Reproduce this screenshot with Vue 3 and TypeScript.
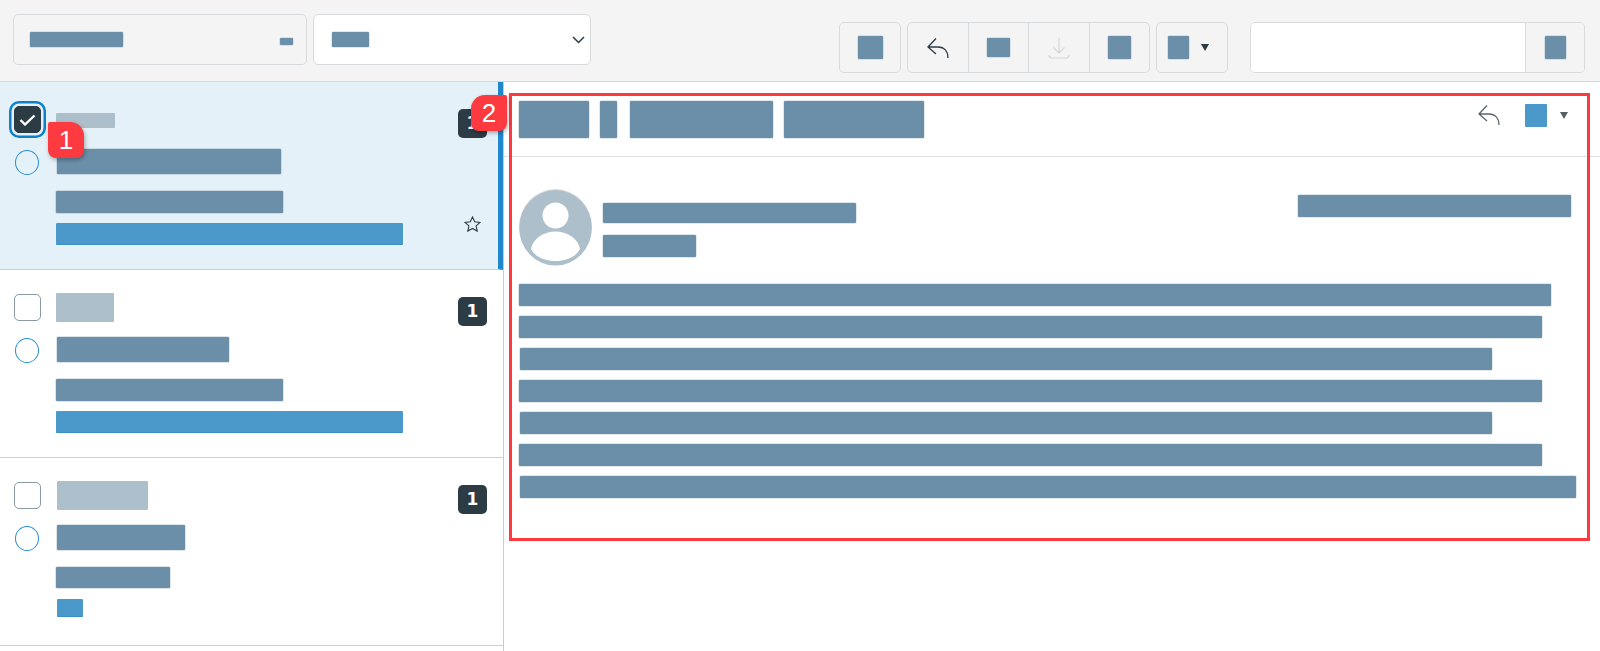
<script setup lang="ts">
interface Bar {
  width: number
  height: number
  top: number
  left: number
  tone: 'dim' | 'slate' | 'blue'
}

interface Message {
  id: number
  selected: boolean
  starred: boolean
  bars: Bar[]
}

const messages: Message[] = [
  {
    id: 1,
    selected: true,
    starred: true,
    bars: [
      { width: 59, height: 15, top: 31, left: 0, tone: 'dim' },
      { width: 224, height: 25, top: 21, left: 1, tone: 'slate' },
      { width: 227, height: 22, top: 17, left: 0, tone: 'slate' },
      { width: 347, height: 22, top: 10, left: 0, tone: 'blue' }
    ]
  },
  {
    id: 2,
    selected: false,
    starred: false,
    bars: [
      { width: 58, height: 29, top: 23, left: 0, tone: 'dim' },
      { width: 172, height: 25, top: 15, left: 1, tone: 'slate' },
      { width: 227, height: 22, top: 17, left: 0, tone: 'slate' },
      { width: 347, height: 22, top: 10, left: 0, tone: 'blue' }
    ]
  },
  {
    id: 3,
    selected: false,
    starred: false,
    bars: [
      { width: 91, height: 29, top: 23, left: 1, tone: 'dim' },
      { width: 128, height: 25, top: 15, left: 1, tone: 'slate' },
      { width: 114, height: 21, top: 17, left: 0, tone: 'slate' },
      { width: 26, height: 18, top: 11, left: 1, tone: 'blue' }
    ]
  }
]

const tabs = [
  { width: 70, gap: 0 },
  { width: 16.5, gap: 11 },
  { width: 142.5, gap: 13.5 },
  { width: 139.5, gap: 11.5 }
]

const bodyLines = [
  { width: 1032, left: 0 },
  { width: 1022.5, left: 0 },
  { width: 972, left: 1 },
  { width: 1022.5, left: 0 },
  { width: 972, left: 1 },
  { width: 1022.5, left: 0 },
  { width: 1055.5, left: 1 }
]
</script>

<template>
  <div class="inbox">
    <header class="toolbar">
      <div class="filters">
        <div class="field field--search">
          <span class="block block--course"></span>
          <span class="block block--tiny"></span>
        </div>
        <div class="field field--select">
          <span class="block block--term"></span>
          <svg class="chevron" width="13" height="8" viewBox="0 0 13 8" aria-hidden="true">
            <path d="M1 1l5.500 5.500L12 1" />
          </svg>
        </div>
      </div>

      <div class="actions">
        <button type="button" class="tool tool--single">
          <span class="block block--compose"></span>
        </button>

        <div class="tool-group">
          <button type="button" class="tool">
            <svg class="reply" width="22" height="20" viewBox="0 0 22 20" aria-hidden="true">
              <path d="M9 .5L1 9l8 7M1 9h10c6 0 10 4 10 11" />
            </svg>
          </button>
          <button type="button" class="tool">
            <span class="block block--archive"></span>
          </button>
          <button type="button" class="tool tool--disabled">
            <svg class="download" width="22" height="22" viewBox="0 0 22 22" aria-hidden="true">
              <path d="M11 1v15M5.500 10.500L11 16l5.500-5.500M1 18c0 2 1 3 3 3h14c2 0 3-1 3-3" />
            </svg>
          </button>
          <button type="button" class="tool">
            <span class="block block--trash"></span>
          </button>
        </div>

        <button type="button" class="tool tool--menu">
          <span class="block block--more"></span>
          <span class="caret"></span>
        </button>

        <div class="search">
          <div class="search__input"></div>
          <button type="button" class="search__button">
            <span class="block block--more"></span>
          </button>
        </div>
      </div>
    </header>

    <main class="workspace">
      <section class="message-list">
        <article
          v-for="message in messages"
          :key="message.id"
          class="message"
          :class="{ 'message--selected': message.selected }"
        >
          <div class="message__controls">
            <span class="checkbox" :class="{ 'checkbox--checked': message.selected }">
              <svg v-if="message.selected" width="17" height="12" viewBox="0 0 17 12" aria-hidden="true">
                <path d="M1.500 6l4.500 4.500L15.500 1.500" />
              </svg>
            </span>
            <span class="radio"></span>
          </div>

          <div class="message__text">
            <span
              v-for="(bar, index) in message.bars"
              :key="index"
              class="bar"
              :class="`bar--${bar.tone}`"
              :style="{
                width: `${bar.width}px`,
                height: `${bar.height}px`,
                marginTop: `${bar.top}px`,
                marginLeft: `${bar.left}px`
              }"
            ></span>
          </div>

          <div class="message__meta">
            <span class="count">1</span>
            <svg v-if="message.starred" class="star" width="17" height="16" viewBox="0 0 17 16" aria-hidden="true">
              <path d="M8.500 1l2.200 4.800 5.300.6-3.900 3.500 1.100 5.200-4.700-2.700-4.700 2.700 1.100-5.200L1 6.400l5.300-.6z" />
            </svg>
          </div>
        </article>
      </section>

      <section class="detail">
        <div class="detail__head">
          <div class="tabs">
            <span
              v-for="(tab, index) in tabs"
              :key="index"
              class="block block--tab"
              :style="{ width: `${tab.width}px`, marginLeft: `${tab.gap}px` }"
            ></span>
          </div>
          <div class="detail__actions">
            <svg class="reply reply--muted" width="22" height="20" viewBox="0 0 22 20" aria-hidden="true">
              <path d="M9 .5L1 9l8 7M1 9h10c6 0 10 4 10 11" />
            </svg>
            <span class="block block--settings"></span>
            <span class="caret caret--muted"></span>
          </div>
        </div>

        <div class="detail__body">
          <div class="sender">
            <svg class="avatar" width="73" height="77" viewBox="0 0 73 77" aria-hidden="true">
              <ellipse cx="36.500" cy="38" rx="36.500" ry="38" fill="#d9dde0" />
              <ellipse cx="36.500" cy="38.800" rx="36.300" ry="37.800" fill="#adbfcb" />
              <circle cx="36.500" cy="26.500" r="13" fill="#fff" />
              <path d="M12 60c2-11 13-17.500 24.500-17.500S59 49 61 60c-4 8-14 12-24.500 12S16 68 12 60z" fill="#fff" />
            </svg>
            <div class="sender__names">
              <span class="block block--name"></span>
              <span class="block block--role"></span>
            </div>
            <span class="block block--date"></span>
          </div>

          <div class="lines">
            <span
              v-for="(line, index) in bodyLines"
              :key="index"
              class="block block--line"
              :style="{ width: `${line.width}px`, marginLeft: `${line.left}px` }"
            ></span>
          </div>
        </div>
      </section>
    </main>

    <div class="callout-frame"></div>
    <span class="callout callout--one">1</span>
    <span class="callout callout--two">2</span>
  </div>
</template>

<style>
html,
body {
  margin: 0;
  background: #fff;
}
</style>

<style scoped>
.inbox {
  position: relative;
  height: 651px;
  overflow: hidden;
  background: #fff;
  font-family: "Liberation Sans", Arial, sans-serif;
}

.toolbar {
  display: flex;
  justify-content: space-between;
  box-sizing: border-box;
  height: 82px;
  padding: 0 15px 0 12.5px;
  border-bottom: 1px solid #d5d8da;
  background: #f4f4f4;
}

.filters {
  display: flex;
  gap: 6px;
  margin-top: 14px;
}

.field {
  display: flex;
  align-items: flex-start;
  justify-content: space-between;
  box-sizing: border-box;
  height: 51px;
  padding: 17px 13px 0 16.5px;
  border: 1px solid #d8dbdd;
  border-radius: 5px;
}

.field--search {
  width: 294px;
}

.field--select {
  width: 278px;
  background: #fff;
  padding-left: 18px;
  padding-right: 5px;
}

.block {
  display: block;
  flex: none;
  border-radius: 1px;
  background: #6b8fa9;
  box-shadow: 0 0 0 0.5px rgba(90, 125, 150, 0.35);
}

.block--course {
  width: 93px;
  height: 15px;
}

.block--tiny {
  width: 13px;
  height: 7px;
  margin-top: 6px;
}

.block--term {
  width: 37px;
  height: 15px;
}

.chevron {
  margin-top: 4px;
  fill: none;
  stroke: #2d3b45;
  stroke-width: 1.5;
}

.actions {
  display: flex;
  align-items: flex-start;
  gap: 6px;
  margin-top: 22px;
}

.tool {
  display: flex;
  align-items: center;
  justify-content: center;
  box-sizing: border-box;
  flex: 1;
  height: 51px;
  padding: 0;
  border: 0;
  background: transparent;
}

.tool--single,
.tool--menu {
  flex: none;
  border: 1px solid #d8dbdd;
  border-radius: 5px;
}

.tool--single {
  width: 62px;
}

.tool--menu {
  width: 72px;
  gap: 12px;
  padding-right: 7px;
}

.tool-group {
  display: flex;
  width: 243px;
  box-sizing: border-box;
  border: 1px solid #d8dbdd;
  border-radius: 5px;
}

.tool-group .tool {
  height: 49px;
}

.tool-group .tool + .tool {
  border-left: 1px solid #d8dbdd;
}

.reply {
  fill: none;
  stroke: #2d3b45;
  stroke-width: 1.3;
}

.reply--muted {
  stroke: #5a6670;
}

.download {
  fill: none;
  stroke: #d3d6d8;
  stroke-width: 1.2;
}

.block--compose {
  width: 25px;
  height: 23px;
}

.block--archive {
  width: 23px;
  height: 19px;
}

.block--trash {
  width: 23px;
  height: 23px;
}

.block--more {
  width: 21px;
  height: 23px;
}

.caret {
  width: 0;
  height: 0;
  border-left: 4px solid transparent;
  border-right: 4px solid transparent;
  border-top: 7px solid #2d3b45;
}

.caret--muted {
  border-left-width: 4.5px;
  border-right-width: 4.5px;
  border-top-color: #555f66;
}

.search {
  display: flex;
  width: 335px;
  height: 51px;
  margin-left: 16px;
  box-sizing: border-box;
  border: 1px solid #d8dbdd;
  border-radius: 5px;
  overflow: hidden;
}

.search__input {
  flex: 1;
  background: #fff;
}

.search__button {
  display: flex;
  align-items: center;
  justify-content: center;
  width: 59px;
  padding: 0;
  border: 0;
  border-left: 1px solid #d8dbdd;
  background: #f4f4f4;
}

.workspace {
  display: flex;
  height: 569px;
}

.message-list {
  flex: none;
  box-sizing: border-box;
  width: 504px;
  border-right: 1px solid #c9cccf;
}

.message {
  display: flex;
  box-sizing: border-box;
  height: 188px;
  border-bottom: 1px solid #ccd0d3;
  background: #fff;
}

.message--selected {
  background: #e4f1f8;
  border-right: 5px solid #1f88cc;
}

.message__controls {
  display: flex;
  flex-direction: column;
  align-items: flex-start;
  flex: none;
  gap: 17px;
  width: 56px;
  padding: 24px 0 0 14px;
  box-sizing: border-box;
}

.checkbox {
  position: relative;
  display: flex;
  align-items: center;
  justify-content: center;
  box-sizing: border-box;
  width: 27px;
  height: 27px;
  border: 1px solid #8a9aa6;
  border-radius: 5px;
  background: #fff;
}

.checkbox--checked {
  border-color: #2d3b45;
  background: #2d3b45;
  box-shadow: 0 0 0 2.5px #e4f1f8, 0 0 0 5px #0f7fc6;
}

.checkbox svg {
  fill: none;
  stroke: #fff;
  stroke-width: 2.4;
}

.radio {
  box-sizing: border-box;
  width: 24px;
  height: 25px;
  margin-left: 0.5px;
  border: 1.5px solid #2a8dcf;
  border-radius: 50%;
  background: transparent;
}

.message__text {
  display: flex;
  flex-direction: column;
  align-items: flex-start;
  flex: 1;
}

.bar {
  display: block;
  flex: none;
  border-radius: 1px;
}

.bar--dim {
  background: #adbfcb;
}

.bar--slate {
  background: #6b8fa9;
  box-shadow: 0 0 0 0.5px rgba(90, 125, 150, 0.4);
}

.bar--blue {
  box-sizing: border-box;
  background: #4b98ca;
  border-bottom: 1px solid #3a91ca;
}

.message__meta {
  display: flex;
  flex-direction: column;
  align-items: center;
  flex: none;
  width: 29px;
  margin-right: 16px;
  padding-top: 27px;
}

.message--selected .message__meta {
  margin-right: 11px;
}

.count {
  display: flex;
  align-items: center;
  justify-content: center;
  width: 29px;
  height: 29px;
  border-radius: 5px;
  background: #2d3b45;
  color: #fff;
  font: 700 17px/1 "DejaVu Sans", sans-serif;
}

.star {
  margin-top: 78px;
  fill: none;
  stroke: #2d3b45;
  stroke-width: 1.1;
}

.detail {
  flex: 1;
  min-width: 0;
}

.detail__head {
  display: flex;
  justify-content: space-between;
  box-sizing: border-box;
  height: 75px;
  padding: 19px 20px 0 15px;
  border-bottom: 1px solid #e0e3e6;
}

.tabs {
  display: flex;
}

.block--tab {
  height: 37px;
}

.detail__actions {
  display: flex;
  align-items: flex-start;
  padding: 4px 12px 0 0;
}

.block--settings {
  width: 22px;
  height: 23px;
  margin: -1px 13px 0 25px;
  background: #4b98ca;
  box-shadow: none;
}

.caret--muted {
  margin-top: 7px;
}

.detail__body {
  padding: 32px 0 0 15px;
}

.sender {
  display: flex;
  align-items: flex-start;
  height: 77px;
  padding-right: 29px;
}

.avatar {
  flex: none;
}

.sender__names {
  display: flex;
  flex-direction: column;
  gap: 12px;
  flex: 1;
  margin: 14px 0 0 10.5px;
}

.block--name {
  width: 253px;
  height: 20px;
}

.block--role {
  width: 93px;
  height: 22px;
}

.block--date {
  width: 273.5px;
  height: 22px;
  margin-top: 6px;
}

.lines {
  display: flex;
  flex-direction: column;
  align-items: flex-start;
  gap: 10.5px;
  margin-top: 18px;
}

.block--line {
  height: 21.5px;
}

.callout-frame {
  position: absolute;
  top: 93px;
  left: 508.5px;
  width: 1081.5px;
  height: 447.5px;
  box-sizing: border-box;
  border: 3.5px solid #fc3a40;
  pointer-events: none;
}

.callout {
  position: absolute;
  display: flex;
  align-items: center;
  justify-content: center;
  width: 36px;
  height: 36px;
  background: #fc3a40;
  color: #fff;
  font-size: 26px;
  box-shadow: 1px 2px 4px rgba(0, 0, 0, 0.3);
}

.callout--one {
  top: 122px;
  left: 48px;
  border-radius: 2px 14px 8px 8px;
}

.callout--two {
  top: 95px;
  left: 471px;
  border-radius: 14px 2px 8px 8px;
}
</style>
